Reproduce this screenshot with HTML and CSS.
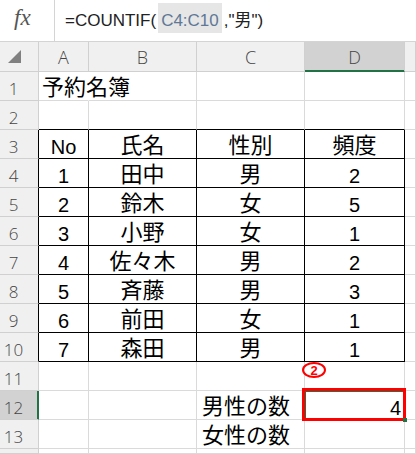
FILE: index.html
```html
<!DOCTYPE html>
<html lang="ja">
<head>
<meta charset="utf-8">
<link rel="stylesheet" href="styles.css">
</head>
<body>
<div class="fbar">
  <div class="fx">fx</div>
  <div class="formula">=COUNTIF(<span class="ref">C4:C10</span>,"男")</div>
</div>
<div class="grid">
  <div class="corner"><svg width="13" height="13" viewBox="0 0 13 13"><polygon points="13,0 13,13 0,13" fill="#808080"/></svg></div>
  <div class="ch">A</div><div class="ch">B</div><div class="ch">C</div><div class="ch sel">D</div><div class="ch"></div>

  <div class="rh">1</div><div class="c j left nob">予約名簿</div><div class="c"></div><div class="c"></div><div class="c"></div><div class="c"></div>
  <div class="rh">2</div><div class="c tt"></div><div class="c tt"></div><div class="c tt"></div><div class="c tt"></div><div class="c"></div>

  <div class="rh tl">3</div><div class="c t mid">No</div><div class="c t j mid">氏名</div><div class="c t j mid">性別</div><div class="c t j mid">頻度</div><div class="c"></div>
  <div class="rh tl">4</div><div class="c t mid">1</div><div class="c t j mid">田中</div><div class="c t j mid">男</div><div class="c t mid">2</div><div class="c"></div>
  <div class="rh tl">5</div><div class="c t mid">2</div><div class="c t j mid">鈴木</div><div class="c t j mid">女</div><div class="c t mid">5</div><div class="c"></div>
  <div class="rh tl">6</div><div class="c t mid">3</div><div class="c t j mid">小野</div><div class="c t j mid">女</div><div class="c t mid">1</div><div class="c"></div>
  <div class="rh tl">7</div><div class="c t mid">4</div><div class="c t j mid">佐々木</div><div class="c t j mid">男</div><div class="c t mid">2</div><div class="c"></div>
  <div class="rh tl">8</div><div class="c t mid">5</div><div class="c t j mid">斉藤</div><div class="c t j mid">男</div><div class="c t mid">3</div><div class="c"></div>
  <div class="rh tl">9</div><div class="c t mid">6</div><div class="c t j mid">前田</div><div class="c t j mid">女</div><div class="c t mid">1</div><div class="c"></div>
  <div class="rh tl">10</div><div class="c t mid">7</div><div class="c t j mid">森田</div><div class="c t j mid">男</div><div class="c t mid">1</div><div class="c"></div>

  <div class="rh">11</div><div class="c"></div><div class="c"></div><div class="c"></div><div class="c"></div><div class="c"></div>
  <div class="rh sel">12</div><div class="c"></div><div class="c"></div><div class="c j left2">男性の数</div><div class="c right active">4</div><div class="c"></div>
  <div class="rh">13</div><div class="c"></div><div class="c"></div><div class="c j left2">女性の数</div><div class="c"></div><div class="c"></div>
  <div class="rh"></div><div class="c"></div><div class="c"></div><div class="c"></div><div class="c"></div><div class="c"></div>
</div>
<div class="mark"><span>2</span></div>
<div class="redbox"></div>
<div class="handle"></div>
</body>
</html>
```
FILE: styles.css
```css
* { box-sizing: border-box; margin: 0; padding: 0; }
body {
  width: 416px;
  height: 454px;
  overflow: hidden;
  background: #fff;
  position: relative;
  font-family: "Liberation Sans", "Noto Sans CJK JP", sans-serif;
  color: #000;
}
.fbar {
  display: flex;
  height: 42px;
  border-bottom: 1px solid #d4d4d4;
}
.fx {
  width: 55px;
  border-right: 1px solid #d4d4d4;
  font-family: "Liberation Serif", serif;
  font-style: italic;
  font-size: 23px;
  line-height: 35px;
  color: #555;
  padding-left: 14px;
}
.formula {
  padding: 3px 0 0 10px;
  line-height: 36px;
  font-size: 17px;
  color: #222;
  white-space: nowrap;
}
.ref {
  display: inline-block;
  vertical-align: top;
  height: 30px;
  background: #e6e6e6;
  color: #5e7896;
  padding: 0 3px;
  margin: 0 2px;
}
.grid {
  display: grid;
  grid-template-columns: 39px 50px 108px 108px 100px 1fr;
  grid-template-rows: 30px repeat(13, 29px) 5px;
}
.grid > div {
  display: flex;
  align-items: flex-end;
  white-space: nowrap;
  line-height: 1;
  border-right: 1px solid #dadada;
  border-bottom: 1px solid #dadada;
}
.corner {
  background: #f0f0f0;
  border-right-color: #d0d0d0 !important;
  border-bottom-color: #d0d0d0 !important;
  align-items: flex-start !important;
  padding: 8px 0 0 8px;
}
.ch {
  background: #f0f0f0;
  border-right-color: #d0d0d0 !important;
  border-bottom-color: #d0d0d0 !important;
  align-items: center !important;
  justify-content: center;
  font-family: "Open Sans", "Liberation Sans", sans-serif;
  font-weight: 300;
  font-size: 18px;
  color: #444;
}
.ch.sel {
  background: #d2d2d2;
  border-bottom-color: #217346 !important;
  box-shadow: inset 0 -1px 0 #217346;
}
.rh {
  background: #f0f0f0;
  border-right-color: #d0d0d0 !important;
  border-bottom-color: #d0d0d0 !important;
  justify-content: center;
  padding: 0 11px 3px 0;
  font-family: "Open Sans", "Liberation Sans", sans-serif;
  font-weight: 300;
  font-size: 17px;
  color: #444;
}
.rh.sel {
  background: #d2d2d2;
  border-right-color: #217346 !important;
  box-shadow: inset -1px 0 0 #217346;
}
.rh.tl { border-right-color: #000 !important; }
.c {
  font-size: 20px;
  padding-bottom: 1px;
}
.c.j { font-size: 22px; }
.c.t { border-right-color: #000; border-bottom-color: #000; }
.c.tt { border-bottom-color: #000; }
.mid { justify-content: center; }
.left { padding-left: 3px; }
.left2 { padding-left: 5px; }
.right { justify-content: flex-end; padding-right: 3px; }
.nob { border-right-color: transparent !important; }
.active { box-shadow: inset 0 0 0 1px #217346; }
.mark {
  position: absolute;
  left: 302px;
  top: 362px;
  width: 24px;
  height: 16px;
  border: 2px solid #f00;
  border-radius: 50%;
  display: flex;
  align-items: center;
  justify-content: center;
  color: #f00;
  font-weight: bold;
  font-size: 13px;
  line-height: 1;
}
.redbox {
  position: absolute;
  left: 302px;
  top: 388px;
  width: 104px;
  height: 33px;
  border: 3px solid #f00;
}
.handle {
  position: absolute;
  left: 403px;
  top: 418px;
  width: 4px;
  height: 4px;
  background: #217346;
}
```
